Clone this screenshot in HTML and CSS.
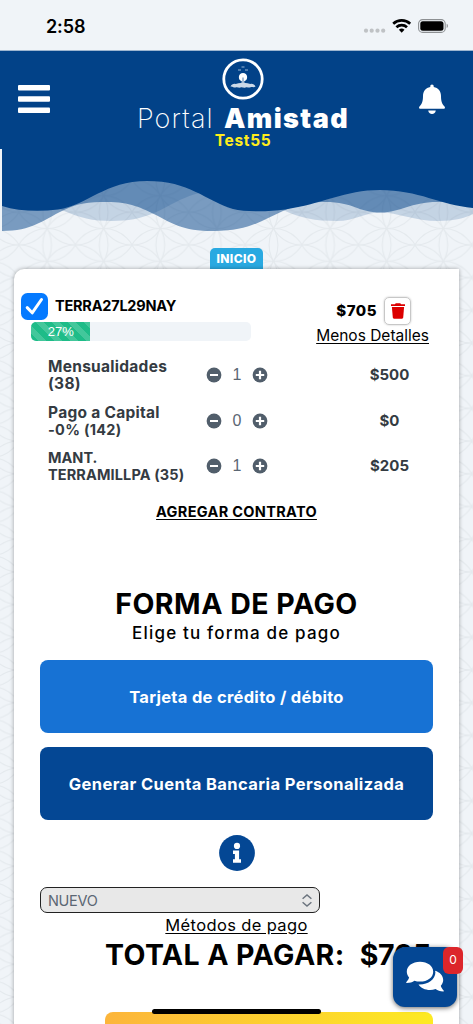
FILE: index.html
```html
<!DOCTYPE html>
<html lang="es">
<head>
<meta charset="utf-8">
<title>Portal Amistad</title>
<link rel="stylesheet" href="styles.css">
</head>
<body>
<div class="screen">
  <svg class="backdrop" width="473" height="1024" aria-hidden="true">
    <defs>
      <pattern id="petals" x="18.8" y="244.9" width="56.6" height="32.7" patternUnits="userSpaceOnUse">
        <g fill="none" stroke="#e4e9ed" stroke-width="1.1">
          <circle cx="0" cy="0" r="32.7"/><circle cx="56.6" cy="0" r="32.7"/>
          <circle cx="0" cy="32.7" r="32.7"/><circle cx="56.6" cy="32.7" r="32.7"/>
          <circle cx="28.3" cy="16.35" r="32.7"/><circle cx="28.3" cy="-16.35" r="32.7"/>
          <circle cx="28.3" cy="49.05" r="32.7"/>
        </g>
      </pattern>
    </defs>
    <rect y="150" width="473" height="874" fill="url(#petals)"/>
  </svg>

  <div class="statusbar">
    <span class="clock">2:58</span>
    <svg width="90" height="20" viewBox="0 0 90 20">
      <g fill="#bfc2c5"><circle cx="3" cy="14.7" r="2.1"/><circle cx="8.7" cy="14.7" r="2.1"/><circle cx="14.5" cy="14.7" r="2.1"/><circle cx="20.2" cy="14.7" r="2.1"/></g>
      <g fill="none" stroke="#000" stroke-width="2.7"><path d="M30.2 7.8a12.5 12.5 0 0 1 17 0"/><path d="M33.4 11.2a7.8 7.8 0 0 1 10.6 0"/></g>
      <path d="M38.7 16.7l-2.8-3a4.2 4.2 0 0 1 5.6 0z"/>
      <rect x="55.6" y="3.6" width="26.6" height="12.8" rx="4" fill="none" stroke="#8d9093" stroke-width="1.1"/>
      <rect x="57.3" y="5.2" width="23.2" height="9.6" rx="2.5"/>
      <path d="M83.7 7.8a2.4 2.4 0 0 1 0 4.2z" fill="#8d9093"/>
    </svg>
  </div>

  <header class="header">
    <svg class="menu" width="32" height="29" viewBox="0 0 32 29" fill="#fff"><rect y="0" width="32" height="5.5" rx="1"/><rect y="11.3" width="32" height="5.5" rx="1"/><rect y="22.6" width="32" height="5.5" rx="1"/></svg>
    <div class="brand">
      <svg width="42" height="42" viewBox="0 0 42 42">
        <circle cx="21" cy="21" r="19.2" fill="none" stroke="#fff" stroke-width="2.8"/>
        <path d="M16 12h3M19.500 9h3M23 12h3" stroke="#9ab7d6" stroke-width="1"/>
        <path d="M21 15a4.200 4.200 0 0 1 1.200 8.200l.4 3h-3.200l.4-3a4.200 4.200 0 0 1 1.200-8.200z" fill="#fff"/>
        <path d="M21 19.500v6" stroke="#024288" stroke-width=".7"/>
        <path d="M8.500 28.500c1-2 3-3 5-2.500 2-1.500 13-1.500 15 0 2-.5 4 .5 5 2.500-2 1.500-3 0-5 .7-2 1-3-.8-5 .3-2 .8-3-.8-5 0-2 .6-3-1-5 0-2 .6-3-1.500-5-1z" fill="#ccd9e8"/>
      </svg>
      <div class="wordmark"><span class="thin">Portal</span><span class="heavy">Amistad</span></div>
      <div class="account">Test55</div>
    </div>
    <svg class="bell" width="26" height="31" viewBox="0 0 26 31" fill="#fff"><path d="M13 .5c1 0 1.700.7 1.700 1.800v.8c4.600.8 7.300 4.300 7.300 9 0 5.500 1 8 3.500 10.300.9.900.4 2.300-.9 2.300H1.400c-1.300 0-1.800-1.400-.9-2.300C3 20.100 4 17.600 4 12.100c0-4.700 2.700-8.200 7.300-9v-.8C11.300 1.200 12 .5 13 .5z"/><path d="M9.200 26.600h7.600c-.3 2.200-1.800 3.500-3.800 3.500s-3.500-1.300-3.800-3.500z"/></svg>
  </header>

  <svg class="waves" width="473" height="85" viewBox="0 149 473 85" aria-hidden="true">
    <path fill="#024288" fill-opacity=".18" d="M2 149V190C30 190 45 201 63 210.500C80 218 92 221 112 221C145 221 160 210 176 202C190 195 197 193 207 192C245 192 265 200 284 210.500C300 218 315 221 337 221C355 221 364 212.500 381 212.500C397 212.500 415 221 438 221C455 221 465 218 473 214V149z"/>
    <path fill="#024288" fill-opacity=".5" d="M2 149V231C32 231 43 220 63 210.500C78 203 88 202 107 202C130 202 142 208 156 215C172 223 181 231 214 231C250 231 262 220 284 210.500C299 204 312 202 325 202C355 202 357 212.500 381 212.500C400 212.500 411 202 437 202C450 202 462 203 473 208V149z"/>
    <path fill="#024288" d="M0 149H473V208C440 205 419 190 380 190C345 190 322 204 285 209.500C268 212 245 212 233 209C204 200 190 181 147 181C105 181 88 205 58 209.500C38 212 18 211 2 206H0z"/>
    <path fill="#f0f4f8" d="M0 149H2V234H0z"/>
  </svg>

  <div class="tab">INICIO</div>

  <main class="card">
    <section class="contract">
      <div class="left">
        <div class="name-row">
          <svg width="27" height="27" viewBox="0 0 27 27"><rect width="27" height="27" rx="6.500" fill="#057aff"/><path d="M6.200 14.600l5 5.200 9.300-13.300" fill="none" stroke="#fff" stroke-width="3" stroke-linecap="round" stroke-linejoin="round"/></svg>
          <span class="contract-name">TERRA27L29NAY</span>
        </div>
        <div class="progress"><div class="progress-fill" style="width:27%">27%</div></div>
      </div>
      <div class="right">
        <div class="price-row">
          <span class="price">$705</span>
          <span class="trash"><svg width="14" height="16" viewBox="0 0 14 16" fill="#dc0000"><path d="M0 1.200h4L4.700.2h4.600l.7 1h4v1.900H0z"/><path d="M.9 4h12.200l-.9 10.600c-.1.800-.5 1.100-1.200 1.100H3c-.7 0-1.100-.3-1.200-1.100z"/></svg></span>
        </div>
        <a class="details">Menos Detalles</a>
      </div>
    </section>

    <section class="lines">
      <div class="line"><div class="label"><span class="wide">Mensualidades</span><br><span class="wide">(38)</span></div>
        <div class="stepper"><svg width="16" height="16" viewBox="0 0 16 16"><circle cx="8" cy="8" r="7.400" fill="#515e6b"/><path d="M4 8h8" stroke="#fff" stroke-width="2"/></svg><span>1</span><svg width="16" height="16" viewBox="0 0 16 16"><circle cx="8" cy="8" r="7.400" fill="#515e6b"/><path d="M3.800 8h8.400M8 3.800v8.400" stroke="#fff" stroke-width="2.200"/></svg></div>
        <div class="amount">$500</div></div>
      <div class="line"><div class="label"><span class="wide">Pago a Capital</span><br><span class="medium">-0% (142)</span></div>
        <div class="stepper"><svg width="16" height="16" viewBox="0 0 16 16"><circle cx="8" cy="8" r="7.400" fill="#515e6b"/><path d="M4 8h8" stroke="#fff" stroke-width="2"/></svg><span>0</span><svg width="16" height="16" viewBox="0 0 16 16"><circle cx="8" cy="8" r="7.400" fill="#515e6b"/><path d="M3.800 8h8.400M8 3.800v8.400" stroke="#fff" stroke-width="2.200"/></svg></div>
        <div class="amount">$0</div></div>
      <div class="line"><div class="label"><span>MANT.</span><br><span class="tight">TERRAMILLPA (35)</span></div>
        <div class="stepper"><svg width="16" height="16" viewBox="0 0 16 16"><circle cx="8" cy="8" r="7.400" fill="#515e6b"/><path d="M4 8h8" stroke="#fff" stroke-width="2"/></svg><span>1</span><svg width="16" height="16" viewBox="0 0 16 16"><circle cx="8" cy="8" r="7.400" fill="#515e6b"/><path d="M3.800 8h8.400M8 3.800v8.400" stroke="#fff" stroke-width="2.200"/></svg></div>
        <div class="amount">$205</div></div>
    </section>

    <a class="add">AGREGAR CONTRATO</a>
    <h1 class="title">FORMA DE PAGO</h1>
    <p class="subtitle">Elige tu forma de pago</p>
    <button class="pay card-pay"><span>Tarjeta de crédito / débito</span></button>
    <button class="pay bank-pay"><span>Generar Cuenta Bancaria Personalizada</span></button>
    <svg class="info" width="36" height="36" viewBox="0 0 36 36"><circle cx="18" cy="18" r="17.900" fill="#044794"/><circle cx="18" cy="10.900" r="3.100" fill="#fff"/><path fill="#fff" d="M14 15.500h6.100v8.700h1.900v3.500h-8v-3.500h1.900V19H14z"/></svg>
    <div class="select"><span>NUEVO</span><svg width="10" height="13" viewBox="0 0 10 13" fill="none" stroke="#6b747e" stroke-width="1.500"><path d="M.6 4.700L5 1l4.400 3.700M.6 8.300L5 12l4.400-3.700"/></svg></div>
    <a class="methods">Métodos de pago</a>
    <div class="total"><span class="total-label">TOTAL A PAGAR:</span><span class="total-value">$705</span></div>
    <div class="submit"></div>
  </main>

  <div class="chat">
    <svg width="38" height="32" viewBox="0 0 38 32" fill="#fff"><path d="M14 .8C21.500.8 27.200 5 27.200 10.700S21.500 20.600 14 20.600c-2 0-3.900-.3-5.600-.9C6.500 21 3.800 22 .8 22c-.6 0-.7-.6-.4-1 1.400-1.500 2.400-3.300 2.700-4.500C1.700 14.900.8 12.900.8 10.700.8 5 6.500.8 14 .8z"/><path d="M29 9.800c4.800 1.300 8.200 4.900 8.200 9.200 0 2.200-.9 4.200-2.400 5.800.4 1.500 1.300 3 2.800 4.600.4.400.2 1-.4 1-3 0-5.700-1-7.600-2.400-1.700.6-3.600.9-5.600.9-5 0-9.300-2.200-11.500-5.500 9.300.5 16.900-5 16.900-12.200z"/></svg>
    <span class="badge">0</span>
  </div>
  <div class="home"></div>
</div>
</body>
</html>
```
FILE: styles.css
```css
* { box-sizing: border-box; }
body { margin: 0; background: #f0f4f8; font-family: Inter, "Open Sans", sans-serif; color: #000; }
.screen { position: relative; width: 473px; height: 1024px; overflow: hidden; display: flex; flex-direction: column; }
.backdrop { position: absolute; inset: 0; }
.statusbar, .header, .waves, .tab, .card { position: relative; flex: none; }

.statusbar { height: 51px; padding: 16px 20px 0 46px; display: flex; justify-content: space-between; background: #f0f4f8; border-bottom: 1px solid #9db5d0; }
.clock { font-size: 18px; line-height: 21px; font-weight: 600; letter-spacing: -.1px; }
.header { height: 98px; padding: 0 28px 0 18px; display: flex; justify-content: space-between; background: #024288; color: #fff; }
.menu { margin-top: 34px; }
.bell { margin-top: 33px; }
.brand { width: 212px; margin-left: 17px; display: flex; flex-direction: column; align-items: center; padding-top: 7px; }
.brand svg { flex: none; }
.wordmark { display: flex; align-items: center; justify-content: space-between; width: 212px; height: 27px; margin-top: 5px; font-size: 26px; line-height: 27px; white-space: nowrap; }
.thin { font-weight: 200; font-size: 27px; letter-spacing: 1.1px; }
.heavy { font-weight: 900; font-size: 27px; letter-spacing: 1.400px; margin-right: 0; }
.account { font-size: 15.500px; line-height: 18px; font-weight: 700; color: #ffed1c; letter-spacing: .7px; }
.waves { display: block; }

.tab { width: 53px; height: 21px; margin: 14px 0 0 210px; border-radius: 5px 5px 0 0; background: #29a9e1; color: #fff; font-size: 12px; line-height: 22px; font-weight: 800; letter-spacing: .4px; text-align: center; }
.card { width: 445px; height: 780px; margin: 0 0 0 14px; padding-top: 24px; background: #fff; border-radius: 10px 0 0 0; box-shadow: 0 0 4px rgba(0,0,0,.35); display: flex; flex-direction: column; }

.contract { display: flex; justify-content: space-between; height: 62px; padding: 0 30px 0 7px; flex: none; }
.name-row { display: flex; gap: 7px; height: 29px; }
.contract-name { font-size: 14.500px; line-height: 26px; font-weight: 700; letter-spacing: -.22px; }
.progress { width: 220px; height: 19px; margin-left: 10px; background: #f0f4f8; border-radius: 5px; overflow: hidden; }
.progress-fill { height: 100%; font: 13px/19px "Liberation Sans", Arial, sans-serif; color: #fff; text-align: center; background: repeating-linear-gradient(45deg, #1ebc88 0 5.600px, #43c79b 5.600px 11.200px); }
.right { display: flex; flex-direction: column; align-items: flex-end; padding-top: 3px; }
.price-row { display: flex; align-items: center; gap: 7px; margin-right: 18px; height: 29px; }
.price { font-size: 15px; font-weight: 800; letter-spacing: .5px; }
.trash { width: 27px; height: 28px; border: 1px solid #c7c7c7; border-radius: 5px; box-shadow: 0 0 2px rgba(0,0,0,.25); display: flex; align-items: center; justify-content: center; }
.details { margin-top: 1px; font-size: 15.500px; line-height: 20px; text-decoration: underline; text-underline-offset: 2px; }

.line { display: grid; grid-template-columns: 158px 62px 1fr; height: 45.700px; padding: 3px 0 0 34px; color: #343b42; }
.label { font-size: 14.500px; line-height: 17px; font-weight: 700; white-space: nowrap; }
.wide { font-size: 15.500px; letter-spacing: .28px; }
.medium { letter-spacing: .3px; }
.tight { letter-spacing: .12px; }
.stepper { display: flex; justify-content: space-between; align-items: center; height: 34px; font: 16px/34px "Liberation Sans", Arial, sans-serif; color: #5b6673; }
.amount { padding: 0 38px 0 90px; font-size: 15px; line-height: 34px; font-weight: 700; text-align: center; }

.add { align-self: center; margin-top: 10px; font-size: 14.500px; line-height: 20px; font-weight: 700; letter-spacing: .32px; text-decoration: underline; text-underline-offset: 2px; }
.title { margin: 64px 0 0; text-align: center; font-size: 28.500px; line-height: 36px; font-weight: 700; letter-spacing: .5px; }
.subtitle { margin: 1px 0 0; text-align: center; font-size: 17px; line-height: 20px; font-weight: 500; letter-spacing: 1.180px; }
.pay { width: 393px; height: 73px; margin: 0 0 0 26px; padding: 0; border: 0; border-radius: 8px; font: 700 16.500px Inter, sans-serif; color: #fff; white-space: nowrap; flex: none; }
.card-pay { margin-top: 17px; background: #1772d4; letter-spacing: .3px; }
.bank-pay { margin-top: 14px; background: #044794; letter-spacing: .41px; }
.info { align-self: center; margin-top: 15px; flex: none; }
.select { width: 280px; height: 26px; margin: 16px 0 0 26px; padding: 0 7px; border: 1px solid #222; border-radius: 7px; background: #e8e8e8; display: flex; align-items: center; justify-content: space-between; font-size: 14.500px; letter-spacing: -.3px; color: #5b6673; flex: none; }
.methods { align-self: center; margin-top: 2px; font-size: 16.500px; line-height: 20px; letter-spacing: .36px; text-decoration: underline; text-underline-offset: 2px; }
.total { display: flex; gap: 15px; margin: 2px 0 0 91px; height: 36px; font-size: 28.500px; line-height: 36px; font-weight: 700; white-space: nowrap; }
.total-label { letter-spacing: .4px; }
.total-value { letter-spacing: -.2px; }
.submit { margin: 39px 26px 0 91px; height: 50px; border-radius: 8px; background: linear-gradient(90deg, #fcb53b, #fdea23); flex: none; }

.chat { position: absolute; left: 393px; top: 947px; width: 64px; height: 60px; border-radius: 12px; background: #044794; box-shadow: 0 1px 5px rgba(0,0,0,.6); padding: 14px 0 0 13px; }
.badge { position: absolute; left: 50px; top: 0; width: 20px; height: 27px; border-radius: 6px; background: #dc262b; color: #fff; font-size: 12px; line-height: 26px; text-align: center; }
.home { position: absolute; left: 152px; top: 1009px; width: 169px; height: 5px; border-radius: 3px; background: #000; }
```
